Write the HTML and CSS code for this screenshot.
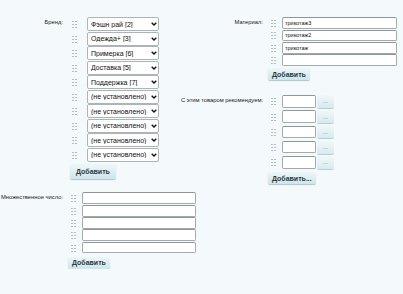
FILE: index.html
```html
<!DOCTYPE html>
<html lang="ru">
<head>
  <meta charset="UTF-8" />
  <title>Свойства товара</title>
  <link rel="stylesheet" href="styles.css">
</head>
<body>
  <div class="form">

    <!-- Бренд -->
    <div class="field brand">
      <div class="label"><span>Бренд:</span></div>
      <div class="values">
        <div class="row"><span class="handle"></span><div class="select-wrap"><select><option>Фэшн рай [2]</option></select><svg class="chevron" viewBox="0 0 6 4"><polyline points="0.7,0.7 3,3 5.3,0.7" /></svg></div></div>
        <div class="row"><span class="handle"></span><div class="select-wrap"><select><option>Одежда+ [3]</option></select><svg class="chevron" viewBox="0 0 6 4"><polyline points="0.7,0.7 3,3 5.3,0.7" /></svg></div></div>
        <div class="row"><span class="handle"></span><div class="select-wrap"><select><option>Примерка [6]</option></select><svg class="chevron" viewBox="0 0 6 4"><polyline points="0.7,0.7 3,3 5.3,0.7" /></svg></div></div>
        <div class="row"><span class="handle"></span><div class="select-wrap"><select><option>Доставка [5]</option></select><svg class="chevron" viewBox="0 0 6 4"><polyline points="0.7,0.7 3,3 5.3,0.7" /></svg></div></div>
        <div class="row"><span class="handle"></span><div class="select-wrap"><select><option>Поддержка [7]</option></select><svg class="chevron" viewBox="0 0 6 4"><polyline points="0.7,0.7 3,3 5.3,0.7" /></svg></div></div>
        <div class="row"><span class="handle"></span><div class="select-wrap"><select><option>(не установлено)</option></select><svg class="chevron" viewBox="0 0 6 4"><polyline points="0.7,0.7 3,3 5.3,0.7" /></svg></div></div>
        <div class="row"><span class="handle"></span><div class="select-wrap"><select><option>(не установлено)</option></select><svg class="chevron" viewBox="0 0 6 4"><polyline points="0.7,0.7 3,3 5.3,0.7" /></svg></div></div>
        <div class="row"><span class="handle"></span><div class="select-wrap"><select><option>(не установлено)</option></select><svg class="chevron" viewBox="0 0 6 4"><polyline points="0.7,0.7 3,3 5.3,0.7" /></svg></div></div>
        <div class="row"><span class="handle"></span><div class="select-wrap"><select><option>(не установлено)</option></select><svg class="chevron" viewBox="0 0 6 4"><polyline points="0.7,0.7 3,3 5.3,0.7" /></svg></div></div>
        <div class="row"><span class="handle"></span><div class="select-wrap"><select><option>(не установлено)</option></select><svg class="chevron" viewBox="0 0 6 4"><polyline points="0.7,0.7 3,3 5.3,0.7" /></svg></div></div>
        <button type="button" class="btn btn-big">Добавить</button>
      </div>
    </div>

    <div class="col">
      <!-- Материал -->
      <div class="field material">
        <div class="label"><span>Материал:</span></div>
        <div class="values">
          <div class="row"><span class="handle"></span><input type="text" value="трикотаж3"></div>
          <div class="row"><span class="handle"></span><input type="text" value="трикотаж2"></div>
          <div class="row"><span class="handle"></span><input type="text" value="трикотаж"></div>
          <div class="row"><span class="handle"></span><input type="text" value=""></div>
          <button type="button" class="btn">Добавить</button>
        </div>
      </div>

      <!-- Рекомендуем -->
      <div class="field recommend">
        <div class="label"><span>С этим товаром рекомендуем:</span></div>
        <div class="values">
          <div class="row"><span class="handle"></span><input type="text"><button type="button" class="dots">...</button></div>
          <div class="row"><span class="handle"></span><input type="text"><button type="button" class="dots">...</button></div>
          <div class="row"><span class="handle"></span><input type="text"><button type="button" class="dots">...</button></div>
          <div class="row"><span class="handle"></span><input type="text"><button type="button" class="dots">...</button></div>
          <div class="row"><span class="handle"></span><input type="text"><button type="button" class="dots">...</button></div>
          <button type="button" class="btn">Добавить...</button>
        </div>
      </div>
    </div>

    <!-- Множественное число -->
    <div class="field plural">
      <div class="label"><span>Множественное число:</span></div>
      <div class="values">
        <div class="row"><span class="handle"></span><input type="text"></div>
        <div class="row"><span class="handle"></span><input type="text"></div>
        <div class="row"><span class="handle"></span><input type="text"></div>
        <div class="row"><span class="handle"></span><input type="text"></div>
        <div class="row"><span class="handle"></span><input type="text"></div>
        <button type="button" class="btn">Добавить</button>
      </div>
    </div>

  </div>
</body>
</html>
```

FILE: styles.css
```css
* {
  margin: 0;
  padding: 0;
  box-sizing: border-box;
}

body {
  background: #f4fafb;
  font-family: 'Liberation Sans', Arial, sans-serif;
  color: #222;
}

.form {
  display: grid;
  grid-template-columns: 200px 1fr;
  row-gap: 8px;
  padding-top: 17px;
}

.col {
  display: flex;
  flex-direction: column;
  gap: 15px;
}

.field {
  display: flex;
  align-items: flex-start;
}

.plural {
  grid-column: 1 / -1;
}

/* label text is right aligned and may overflow to the left */
.label {
  width: 63px;
  flex-shrink: 0;
  display: flex;
  justify-content: flex-end;
  font-size: 5.8px;
  line-height: 7px;
  padding-top: 1.5px;
  color: #222;
  white-space: nowrap;
}

.values {
  display: flex;
  flex-direction: column;
  align-items: flex-start;
}

.row {
  display: flex;
  align-items: center;
}

/* drag handle */
.handle {
  width: 5px;
  height: 8px;
  margin-left: 8px;
  background-image: radial-gradient(circle, #7c7f80 0.75px, transparent 1px);
  background-size: 3px 3px;
  background-position: -0.5px 0;
}

/* brand selects */
.brand .row {
  height: 14.5px;
  padding-bottom: 0.5px;
}

.brand .handle {
  margin-left: 9px;
}

.select-wrap {
  position: relative;
  margin-left: 10px;
  height: 14px;
}

.select-wrap select {
  display: block;
  appearance: none;
  -webkit-appearance: none;
  width: 72px;
  height: 14px;
  padding: 0 7px 0 3px;
  border: 1px solid #aeb3b5;
  border-radius: 2px;
  background: #fff;
  font-family: 'Liberation Sans', Arial, sans-serif;
  font-size: 7px;
  color: #111;
  outline: none;
}

.chevron {
  position: absolute;
  right: 2px;
  top: 5px;
  width: 6px;
  height: 4px;
  fill: none;
  stroke: #111;
  stroke-width: 1.4;
  pointer-events: none;
}

/* text inputs */
.values input {
  height: 12px;
  margin-left: 6px;
  padding: 0 2px;
  border: 1px solid #a3aaad;
  border-top-color: #8e9699;
  border-radius: 2px;
  background: #fff;
  font-family: 'Liberation Sans', Arial, sans-serif;
  font-size: 5.5px;
  color: #111;
  outline: none;
}

.material .row {
  height: 12.3px;
}

.material input {
  width: 115px;
  height: 11.8px;
}

.recommend .row {
  height: 12.5px;
  margin-bottom: 2.75px;
}

.recommend .row:nth-last-child(2) {
  margin-bottom: 0;
}

.recommend input {
  width: 34px;
  height: 12.5px;
}

.plural .row {
  height: 12.3px;
}

.plural input {
  width: 114px;
  height: 11.8px;
}

.dots {
  width: 17px;
  height: 13px;
  margin-left: 1px;
  border: none;
  border-radius: 2px;
  background: linear-gradient(#f1f8fa, #d7eaf0);
  box-shadow: 0 1px 0 #b9cdd4;
  font-family: 'Liberation Sans', Arial, sans-serif;
  font-size: 6px;
  color: #6b7679;
  line-height: 10px;
}

/* add buttons */
.btn {
  height: 12px;
  margin-top: 2px;
  margin-left: 5px;
  padding: 0 4px;
  border: none;
  border-radius: 2px;
  background: linear-gradient(#eef7fa, #cde5ed);
  box-shadow: 0 1px 1px rgba(60, 90, 100, 0.35);
  font-family: 'Liberation Sans', Arial, sans-serif;
  font-size: 7px;
  font-weight: bold;
  color: #2c3a3f;
  cursor: pointer;
}

.btn-big {
  height: 15px;
  margin-top: 2px;
  margin-left: 7px;
  padding: 0 6px;
}

.recommend .btn {
  margin-top: 3.5px;
}

.plural .btn {
  margin-top: 3px;
}
```
